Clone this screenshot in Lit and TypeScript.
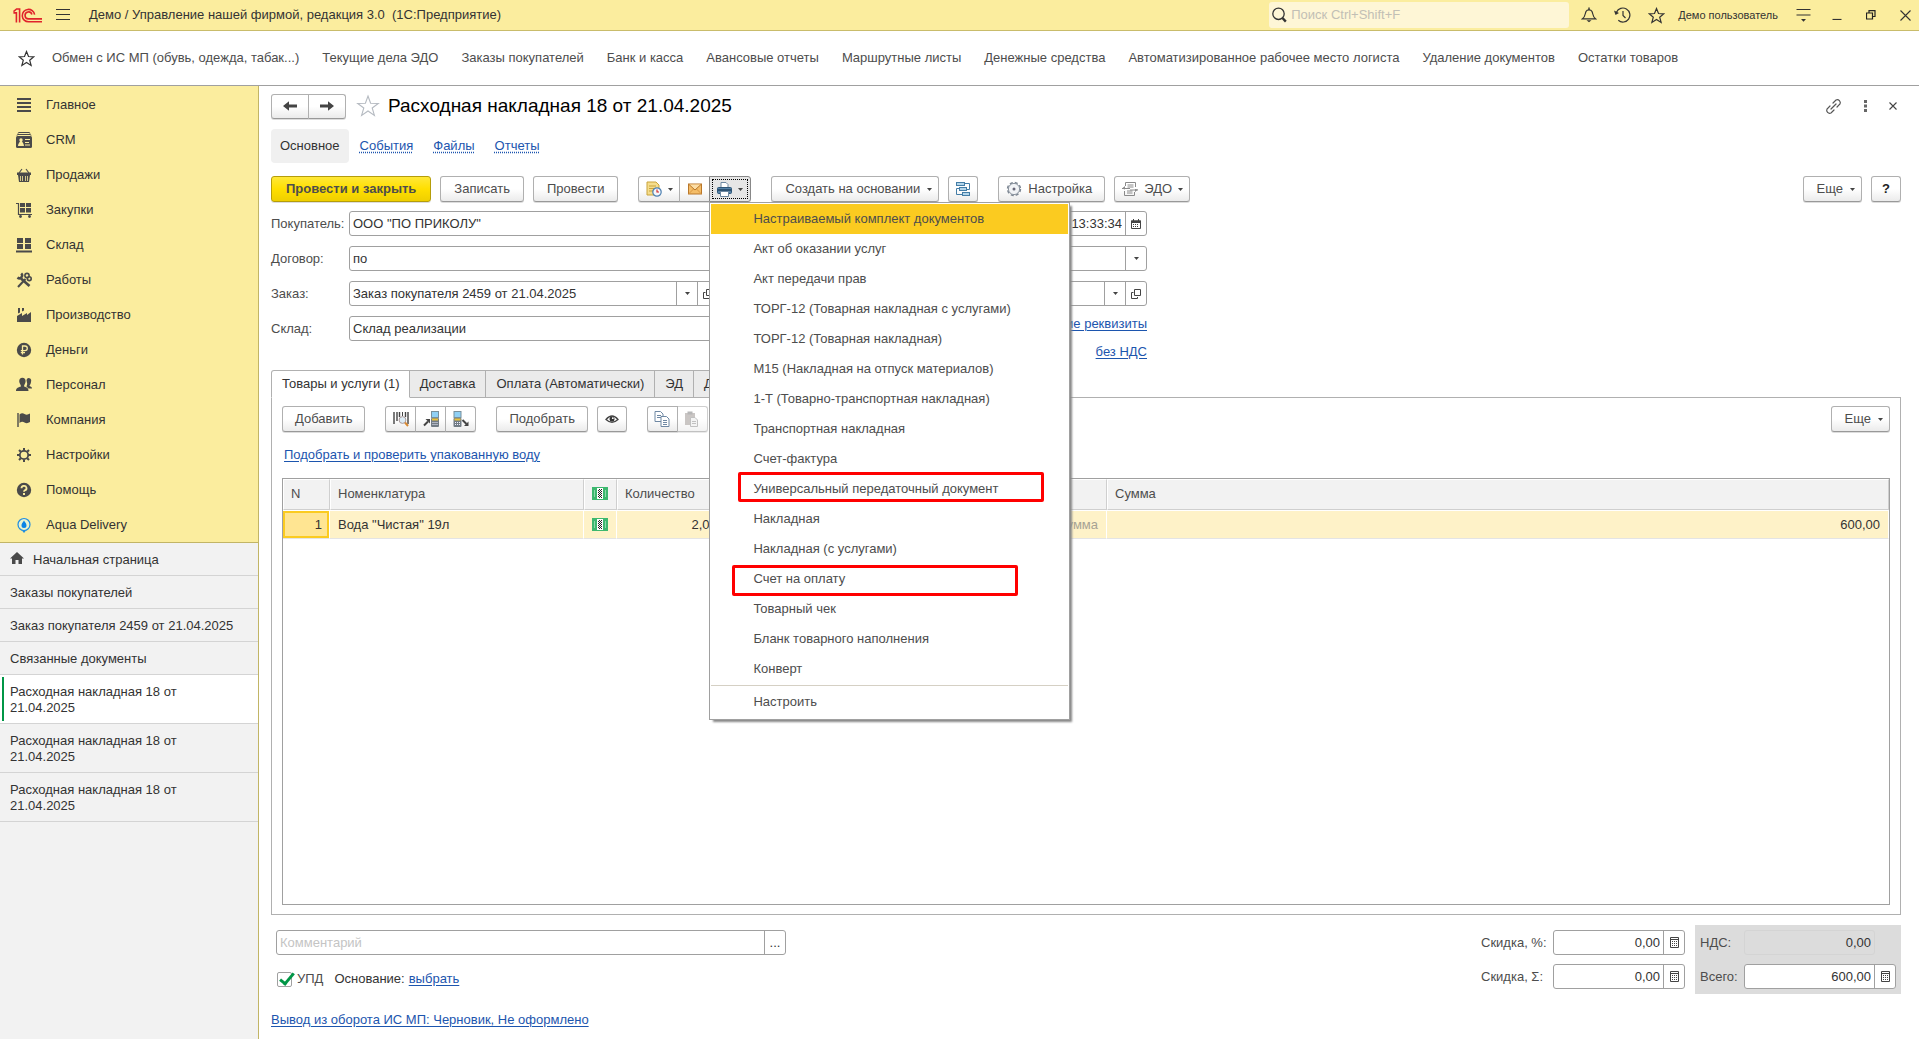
import { LitElement, html, svg, css, nothing, TemplateResult } from "lit";
import { customElement, property } from "lit/decorators.js";
import { classMap } from "lit/directives/class-map.js";

type Glyph = { w: number; h: number; body: TemplateResult };

const G = "#4a4a4a";

const glyphs: Record<string, Glyph> = {
  logo: { w: 29, h: 15, body: svg`<g fill="none" stroke="#e0232b" stroke-width="1.6">
    <path d="M.4 4.9 3.4 4.9V14.6M.4 3.6 3.6 1H6.6V14.6"/>
    <path d="M21.6 6.6A6.2 6.2 0 1 0 15.5 13.8H29"/><path d="M18.9 6.4A3.5 3.5 0 1 0 15.5 10.9H29"/></g>` },
  burger: { w: 14, h: 12, body: svg`<path d="M0 .5H14M0 5.5H14M0 10.5H14" stroke="#333" fill="none"/>` },
  search: { w: 15, h: 16, body: svg`<circle cx="6.5" cy="6.8" r="5.7" fill="none" stroke="#333" stroke-width="1.3"/><path d="M10.5 11 13.8 14.6" stroke="#333" stroke-width="2.4"/>` },
  bell: { w: 16, h: 16, body: svg`<path d="M1.5 11.8C4.6 9.4 3.9 6.6 5 4.4 5.6 3.2 6.4 2.8 8 2.8S10.4 3.2 11 4.4C12.1 6.6 11.4 9.4 14.5 11.8Z" fill="none" stroke="#333" stroke-width="1.2"/><path d="M8 .5V3" stroke="#333" stroke-width="1.4"/><path d="M5.5 13.3H10.5L8 15.3Z" fill="#333"/>` },
  history: { w: 17, h: 16, body: svg`<path d="M2.5 5.2A7 7 0 1 1 4.3 13.3" fill="none" stroke="#333" stroke-width="1.2"/><path d="M0 3.6 5 6 1.5 8Z" fill="#333"/><path d="M9 4V8.5L11.5 11" fill="none" stroke="#333" stroke-width="1.2"/>` },
  star: { w: 17, h: 17, body: svg`<path d="M8.5 1.5 10.5 6.5 15.8 6.8 11.7 10.2 13.1 15.4 8.5 12.5 3.9 15.4 5.3 10.2 1.2 6.8 6.5 6.5Z" fill="none" stroke="#333" stroke-width="1.2"/>` },
  bigStar: { w: 24, h: 24, body: svg`<path d="M12 2 14.6 9.2 22.3 9.4 16.2 14 18.4 21.4 12 17 5.6 21.4 7.8 14 1.7 9.4 9.4 9.2Z" fill="#fff" stroke="#b5bac1" stroke-width="1.1"/>` },
  panelMenu: { w: 15, h: 13, body: svg`<path d="M.5 .5H14.5M.5 6H14.5" stroke="#333" fill="none" stroke-width="1.2"/><path d="M5 10H10L7.5 12.7Z" fill="#333"/>` },
  minimize: { w: 10, h: 10, body: svg`<path d="M.5 9.5H9.5" stroke="#333" stroke-width="1.2"/>` },
  restore: { w: 10, h: 10, body: svg`<path d="M.5 3H6.5V9H.5ZM3 3V.7H9V6.5H6.5" fill="none" stroke="#222" stroke-width="1.2"/>` },
  close: { w: 11, h: 11, body: svg`<path d="M.5 .5 10.5 10.5M10.5 .5 .5 10.5" stroke="#333" stroke-width="1.1"/>` },
  closeSmall: { w: 8, h: 8, body: svg`<path d="M.5 .5 7.5 7.5M7.5 .5 .5 7.5" stroke="#444" stroke-width="1.1"/>` },
  link: { w: 17, h: 17, body: svg`<g fill="none" stroke="#555" stroke-width="1.2" stroke-linecap="round"><path d="M8 5 11 2A3 3 0 0 1 15 6L12 9"/><path d="M9 12 6 15A3 3 0 0 1 2 11L5 8"/><path d="M6 11 11 6"/></g>` },
  dots: { w: 3, h: 12, body: svg`<path d="M0 0H3V3H0ZM0 4.5H3V7.5H0ZM0 9H3V12H0Z" fill="#666"/>` },
  back: { w: 14, h: 10, body: svg`<path d="M0 5 6 .2V3.6H14V6.4H6V9.8Z" fill="#444"/>` },
  forward: { w: 14, h: 10, body: svg`<path d="M14 5 8 .2V3.6H0V6.4H8V9.8Z" fill="#444"/>` },
  caret: { w: 5, h: 3, body: svg`<path d="M0 0H5L2.5 3Z" fill="#444"/>` },
  main: { w: 16, h: 16, body: svg`<path d="M1 2H15M1 6H15M1 10H15M1 14H15" stroke="${G}" stroke-width="2"/>` },
  crm: { w: 16, h: 16, body: svg`<path d="M1 3.5Q1 2.5 2 2.5H14Q15 2.5 15 3.5M2 1.5Q2 .5 3 .5H13Q14 .5 14 1.5" fill="none" stroke="${G}"/><rect y="4" width="16" height="12" rx="1.5" fill="${G}"/><g fill="#faec9e"><circle cx="5" cy="8" r="1.7"/><path d="M2 14C2 11.5 3.5 10.5 4.3 9H5.7C6.5 10.5 8 11.5 8 14Z"/><path d="M9 7H14V8H9ZM9 10H13V11H9ZM9 12.5H14V13.5H9Z"/></g>` },
  sales: { w: 16, h: 16, body: svg`<path d="M3 6 6 2M13 6 10 2" stroke="${G}" stroke-width="1.1"/><rect x="1" y="5.5" width="14" height="2.5" fill="${G}"/><path d="M2 8H14L13 15H3Z" fill="${G}"/><path d="M4.5 9V14M6.5 9V14M9.5 9V14M11.5 9V14" stroke="#faec9e" stroke-width=".8"/>` },
  purchases: { w: 16, h: 16, body: svg`<path d="M0 1.5H2.5V12.5H16" fill="none" stroke="${G}" stroke-width="1.2"/><path d="M4 1H9V5H4ZM10 1H15V5H10ZM4 6H9V10.5H4ZM10 6H15V10.5H10Z" fill="${G}"/><circle cx="4.5" cy="14.5" r="1.4" fill="${G}"/><circle cx="13.5" cy="14.5" r="1.4" fill="${G}"/>` },
  stock: { w: 16, h: 16, body: svg`<path d="M1 1H7V6H1ZM9 1H15V6H9ZM1 7H7V12H1ZM9 7H15V12H9ZM0 13.5H16V15.5H0Z" fill="${G}"/>` },
  works: { w: 16, h: 16, body: svg`<g fill="none" stroke="${G}"><path d="M5 6.5 13.5 14" stroke-width="2.6"/><path d="M5.2 1.5A2.6 2.6 0 0 1 1.5 5.5" stroke-width="2.4"/><path d="M2 15 9.5 7" stroke-width="2"/><circle cx="11" cy="3.5" r="2.1" stroke-width="1.6"/><circle cx="13.3" cy="6.7" r="1.9" stroke-width="1.6"/></g>` },
  production: { w: 16, h: 16, body: svg`<path d="M1 15V9L6 6V9L11 6V8L15 5V15Z" fill="${G}"/><path d="M2 6.5V1H4V5.5ZM6 4.5V1H8V3.5Z" fill="${G}"/>` },
  money: { w: 16, h: 16, body: svg`<circle cx="8" cy="8" r="7.2" fill="${G}"/><path d="M6.5 12.5V4H9A2.3 2.3 0 0 1 9 8.6H4.8M4.8 10.6H9" fill="none" stroke="#faec9e" stroke-width="1.3"/>` },
  staff: { w: 16, h: 16, body: svg`<path d="M10.5 3A2.2 2.6 0 0 1 15 5C15 7 13.5 8 13.5 9 15 9.5 16 10 16 11.5H12.5L10.5 9.5Q11.8 7 10.5 3Z" fill="${G}"/><path d="M3.2 4.3A3.2 3.6 0 0 1 9.6 4.3C9.6 6.5 8 8 8 9.5 11 10.5 12.5 11 12.5 14H0C0 11 2 10.5 5 9.5 5 8 3.2 6.5 3.2 4.3Z" fill="${G}"/>` },
  company: { w: 16, h: 16, body: svg`<path d="M2 1V15" stroke="${G}" stroke-width="1.4"/><path d="M3.5 2.5Q6 .5 8.5 2T14 1.5V10Q11 12 8.5 10.5T3.5 11Z" fill="${G}"/>` },
  settings: { w: 16, h: 16, body: svg`<circle cx="8" cy="8" r="4.2" fill="none" stroke="${G}" stroke-width="1.8"/><path d="M8 1V3.5M8 12.5V15M1 8H3.5M12.5 8H15M3 3 4.8 4.8M11.2 11.2 13 13M13 3 11.2 4.8M4.8 11.2 3 13" stroke="${G}" stroke-width="2"/>` },
  help: { w: 16, h: 16, body: svg`<circle cx="8" cy="8" r="7.2" fill="${G}"/><path d="M5.5 6.2A2.5 2.3 0 1 1 8.8 8.3Q8 8.7 8 9.8" fill="none" stroke="#faec9e" stroke-width="1.8"/><rect x="7" y="11" width="2" height="2" fill="#faec9e"/>` },
  aqua: { w: 16, h: 16, body: svg`<circle cx="8" cy="7.5" r="6" fill="#eaf3d0" stroke="#1f8de0" stroke-width="1.2"/><path d="M6 13.5H10L8 16Z" fill="#1f8de0"/><path d="M8 3.5C9.3 5.5 10.5 6.8 10.5 8.5A2.5 2.5 0 0 1 5.5 8.5C5.5 6.8 6.7 5.5 8 3.5Z" fill="#0b83e6"/>` },
  home: { w: 14, h: 12, body: svg`<path d="M7 0 14 6.5H12V12H8.5V8H5.5V12H2V6.5H0Z" fill="${G}"/>` },
  docClock: { w: 16, h: 16, body: svg`<path d="M1 1H10L13 4V14H1Z" fill="#f5dd8c" stroke="#c9a33a"/><path d="M3 5H10M3 7.5H8M3 10H7" stroke="#c9a33a"/><circle cx="11" cy="11" r="4.2" fill="#f2f7fc" stroke="#4d7fb0" stroke-width="1.2"/><path d="M11 8.5V11H13" fill="none" stroke="#d02020" stroke-width="1.1"/>` },
  mail: { w: 14, h: 12, body: svg`<rect x=".5" y="1" width="13" height="10" fill="#f4bd68" stroke="#b9772a"/><path d="M1 10.5 5.5 6M13 10.5 8.5 6" fill="none" stroke="#d99743"/><path d="M1 1.5 7 7 13 1.5" fill="#fbdda6" stroke="#b9772a"/>` },
  printer: { w: 15, h: 15, body: svg`<path d="M4 6V.5H9L11 2.5V6" fill="#fff" stroke="#6d87a0"/><rect x=".5" y="5.5" width="14" height="6" rx="1" fill="#5582a8" stroke="#2f5778"/><path d="M1 8H14" stroke="#1f3f5c" stroke-width="1.4"/><path d="M3.5 9.5H11.5V14.5H3.5Z" fill="#fff" stroke="#6d87a0"/>` },
  structure: { w: 16, h: 16, body: svg`<g fill="#b3d5ea" stroke="#447da6"><rect x="1.5" y="1.5" width="8" height="3"/><rect x="4.5" y="6.5" width="7" height="3"/><rect x="7.5" y="11.5" width="7" height="3"/></g><path d="M9.5 2.5H14.5V8.5H11.5M4.5 7.5H1.5V13.5H7.5" fill="none" stroke="#447da6"/>` },
  gear: { w: 16, h: 16, body: svg`<circle cx="8" cy="8" r="6.4" fill="none" stroke="#7c8692" stroke-width="1.6" stroke-dasharray="3 2.03"/><circle cx="8" cy="8" r="5.6" fill="#f1f3f6" stroke="#8b949f"/><circle cx="8" cy="8" r="1.5" fill="#667"/>` },
  edo: { w: 16, h: 16, body: svg`<g fill="none" stroke="#8a8a8a"><path d="M3.5 5V1.5H13.5V6M2.5 10V14.5H12.5V11"/><path d="M5.5 4H11.5M5.5 6H11.5M5 10H10.5M5 12H10.5"/><path d="M0 7.5H8M8 9H16" stroke-width="1.2"/></g><path d="M0 7.5 3 5V8.5ZM16 8.5 13 11V8Z" fill="#8a8a8a"/>` },
  calendar: { w: 10, h: 10, body: svg`<path d="M.5 2H9.5V9.5H.5Z" fill="#fff" stroke="#444"/><path d="M0 1.5H10V4H0Z" fill="#444"/><path d="M2.5 0V2M7.5 0V2" stroke="#444"/><path d="M2 5.5H8M2 7.5H8" stroke="#444" stroke-dasharray="1 1"/>` },
  open: { w: 10, h: 10, body: svg`<path d="M3.5 .5H9.5V6.5H3.5ZM2.5 3.5H.5V9.5H6.5V8" fill="none" stroke="#444"/>` },
  calc: { w: 9, h: 11, body: svg`<path d="M.5 .5H8.5V10.5H.5ZM.5 2.5H8.5" fill="none" stroke="#444"/><path d="M2 4.5H7M2 6.5H7M2 8.5H7" stroke="#444" stroke-dasharray="1 1"/>` },
  barcode: { w: 16, h: 16, body: svg`<path d="M1 1V13M4 1V10M6.5 1V6M12.5 1V6M15 1V13" stroke="#444" stroke-width="1.4"/><path d="M9.5 1V5" stroke="#444"/><circle cx="9.5" cy="9" r="3.4" fill="#dcecf6" stroke="#a99"/><path d="M12 11.5 15 15" stroke="#d88a35" stroke-width="2"/>` },
  terminalIn: { w: 16, h: 16, body: svg`<rect x="8.5" y=".5" width="7" height="6" fill="#8fd0f5" stroke="#78909c"/><rect x="8" y="7" width="8" height="9" rx="1" fill="#717b84"/><path d="M9 8.5H15" stroke="#e8c23c" stroke-width="2"/><path d="M9.5 11.5H15M9.5 13.5H15" stroke="#eef" stroke-dasharray="1 1"/><path d="M1 14.5 5 10.5" stroke="#444" stroke-width="2"/><path d="M2.5 8H7V12.5Z" fill="#444"/>` },
  terminalOut: { w: 16, h: 16, body: svg`<rect x="1" y=".5" width="7" height="6" fill="#8fd0f5" stroke="#78909c"/><rect x=".5" y="7" width="8" height="9" rx="1" fill="#717b84"/><path d="M1.5 8.5H7.5" stroke="#e8c23c" stroke-width="2"/><path d="M2 11.5H7.5M2 13.5H7.5" stroke="#eef" stroke-dasharray="1 1"/><path d="M9.5 9 13.5 13" stroke="#444" stroke-width="2"/><path d="M15.5 10.5V15H11Z" fill="#444"/>` },
  eye: { w: 14, h: 10, body: svg`<path d="M1 5.5Q7-1.5 13 5.5 7 11 1 5.5Z" fill="#fff" stroke="#444" stroke-width="1.3"/><circle cx="7" cy="5" r="2.5" fill="#333"/><circle cx="7.8" cy="4.2" r=".9" fill="#fff"/>` },
  copy: { w: 16, h: 16, body: svg`<g fill="#fff" stroke="#6f88a3"><path d="M1 .5H6.5L9 3V10.5H1Z"/><path d="M7 5.5H12.5L15 8V15.5H7Z"/></g><path d="M3 4.5H7M3 6.5H7M9 9.5H13M9 11.5H13M9 13.5H13" stroke="#6f88a3"/>` },
  paste: { w: 16, h: 16, body: svg`<path d="M1 2H11V14H1Z" fill="#a8a19e"/><rect x="3.5" y=".5" width="5" height="3" fill="#888"/><path d="M6.5 6.5H11L13.5 9V15.5H6.5Z" fill="#eee" stroke="#999"/><path d="M8 10.5H12M8 12.5H12" stroke="#999"/>` },
  marking: { w: 16, h: 13, body: svg`<path d="M0 0H16V13H0Z" fill="#3db86f"/><path d="M5 1H11V12H5Z" fill="#fff"/><path d="M6 2H10V11H6Z" fill="#222"/><path d="M6 2.5H10M6 4.5H10M6 6.5H10M6 8.5H10M6 10.5H10" stroke="#fff" stroke-dasharray="1 1"/><path d="M7 3.5H10M7 5.5H10M7 7.5H10M7 9.5H10" stroke="#fff" stroke-dasharray="1 1"/><path d="M2.5 3V10M13.5 3V10" stroke="#8ad8a9"/>` },
};

const icon = (name: string) => {
  const g = glyphs[name];
  return html`<svg class="icon" width=${g.w} height=${g.h} viewBox="0 0 ${g.w} ${g.h}" aria-hidden="true">${g.body}</svg>`;
};

const base = css`
  * { box-sizing: border-box; }
  :host { font: 13px/16px "Liberation Sans", Arial, sans-serif; color: #333; }
  button, input { font: inherit; color: inherit; margin: 0; }
  button { padding: 0; border: 0; background: none; }
  .icon { display: block; flex: none; }
`;

@customElement("value-field")
class ValueField extends LitElement {
  @property() label = "";
  @property() value = "";
  @property() placeholder = "";
  @property({ type: Array }) actions: string[] = [];
  @property({ type: Boolean }) hideLabel = false;
  @property({ type: Boolean }) numeric = false;
  @property({ type: Boolean }) disabled = false;

  static styles = [base, css`
    :host { display: flex; align-items: center; }
    label { flex: none; width: var(--label-width, 78px); color: #4d4d4d; }
    .box { flex: 1; min-width: 0; height: 25px; display: flex; border: 1px solid #a0a0a0; border-radius: 3px; background: #fff; overflow: hidden; }
    .box.disabled { background: transparent; border-color: #d4d4d4; margin-right: 21px; }
    input { flex: 1; min-width: 0; width: 0; border: 0; outline: 0; padding: 0 3px; background: transparent; }
    input::placeholder { color: #c4c4c4; opacity: 1; }
    .numeric { text-align: right; }
    button { width: 21px; flex: none; border-left: 1px solid #a0a0a0; display: flex; align-items: center; justify-content: center; }
  `];

  render() {
    return html`
      ${this.hideLabel ? nothing : html`<label for="f">${this.label}</label>`}
      <div class=${classMap({ box: true, disabled: this.disabled })}>
        <input id="f" class=${classMap({ numeric: this.numeric })} .value=${this.value}
          placeholder=${this.placeholder} aria-label=${this.hideLabel ? this.label : nothing} ?readonly=${this.disabled}>
        ${this.actions.map((a) => html`<button aria-label=${a}>${a === "more" ? "..." : icon(a)}</button>`)}
      </div>`;
  }
}

@customElement("title-bar")
class TitleBar extends LitElement {
  static styles = [base, css`
    :host { display: flex; align-items: center; height: 31px; background: #fbed9e; border-bottom: 1px solid #c9bc6b; padding: 0 8px 0 13px; }
    .burger { margin: 0 19px 0 14px; }
    h1 { margin: 0; flex: 1; font-size: 13px; font-weight: normal; white-space: pre; }
    .search { display: flex; align-items: center; width: 300px; height: 26px; padding: 0 3px; background: #fef6d6; border-radius: 3px; }
    .search input { flex: 1; min-width: 0; border: 0; outline: 0; background: none; padding: 0 4px; }
    .search input::placeholder { color: #c2bfb5; opacity: 1; }
    .tools { display: flex; align-items: center; gap: 17px; padding-left: 12px; }
    .user { font-size: 11px; margin: 0 1px 0 -4px; }
    .window { display: flex; align-items: center; gap: 24px; padding-left: 21px; }
  `];
  render() {
    return html`
      ${icon("logo")}
      <button class="burger" aria-label="menu">${icon("burger")}</button>
      <h1>Демо / Управление нашей фирмой, редакция 3.0  (1С:Предприятие)</h1>
      <div class="search">${icon("search")}<input aria-label="search" placeholder="Поиск Ctrl+Shift+F"></div>
      <div class="tools">
        <button aria-label="bell">${icon("bell")}</button>
        <button aria-label="history">${icon("history")}</button>
        <button aria-label="star">${icon("star")}</button>
        <button class="user">Демо пользователь</button>
        <button aria-label="panel">${icon("panelMenu")}</button>
      </div>
      <div class="window">
        <button aria-label="minimize">${icon("minimize")}</button>
        <button aria-label="restore">${icon("restore")}</button>
        <button aria-label="close">${icon("close")}</button>
      </div>`;
  }
}

@customElement("favorites-bar")
class FavoritesBar extends LitElement {
  static styles = [base, css`
    :host { display: flex; align-items: center; height: 55px; padding: 0 18px; gap: 23px; border-bottom: 1px solid #a0a0a0; background: #fff; }
    button { color: #4d4d4d; white-space: nowrap; }
    .star { margin-right: -6px; }
  `];
  items = ["Обмен с ИС МП (обувь, одежда, табак...)", "Текущие дела ЭДО", "Заказы покупателей", "Банк и касса", "Авансовые отчеты", "Маршрутные листы", "Денежные средства", "Автоматизированное рабочее место логиста", "Удаление документов", "Остатки товаров"];
  render() {
    return html`<button class="star" aria-label="star">${icon("star")}</button>${this.items.map((t) => html`<button>${t}</button>`)}`;
  }
}

@customElement("side-bar")
class SideBar extends LitElement {
  static styles = [base, css`
    :host { display: flex; flex-direction: column; background: #f2f2f2; border-right: 1px solid #c2b566; }
    nav { background: #fbed9e; border-bottom: 1px solid #c2b566; padding-bottom: 1px; }
    .section { display: flex; align-items: center; gap: 14px; width: 100%; height: 35px; padding: 2px 16px 0; text-align: left; }
    .win { display: flex; align-items: flex-start; gap: 9px; width: 100%; padding: 9px 60px 7px 10px; text-align: left; border-bottom: 1px solid #d4d4d4; }
    .win.short { padding-right: 0; }
    .win.active { position: relative; background: #fff; }
    .win.active::before { content: ""; position: absolute; left: 2px; top: 2px; bottom: 2px; width: 2px; background: #009646; }
  `];
  sections = [["main", "Главное"], ["crm", "CRM"], ["sales", "Продажи"], ["purchases", "Закупки"], ["stock", "Склад"], ["works", "Работы"], ["production", "Производство"], ["money", "Деньги"], ["staff", "Персонал"], ["company", "Компания"], ["settings", "Настройки"], ["help", "Помощь"], ["aqua", "Aqua Delivery"]];
  windows = ["Начальная страница", "Заказы покупателей", "Заказ покупателя 2459 от 21.04.2025", "Связанные документы", "Расходная накладная 18 от 21.04.2025", "Расходная накладная 18 от 21.04.2025", "Расходная накладная 18 от 21.04.2025"];
  render() {
    return html`
      <nav>${this.sections.map(([i, t]) => html`<button class="section">${icon(i)}<span>${t}</span></button>`)}</nav>
      <div>${this.windows.map((t, i) => html`<button class=${classMap({ win: true, short: i < 4, active: i === 4 })}>${i === 0 ? icon("home") : nothing}<span>${t}</span></button>`)}</div>`;
  }
}

@customElement("print-menu")
class PrintMenu extends LitElement {
  static styles = [base, css`
    :host { display: block; position: absolute; z-index: 5; top: 26px; left: 0; width: 361px; padding: 1px; background: #fff; border: 1px solid #a0a0a0; box-shadow: 3px 3px 2px -1px #888; color: #4d4d4d; }
    button { display: block; width: 100%; height: 30px; padding: 0 0 0 42px; text-align: left; }
    .current { background: #fbcb20; }
    .last { margin-top: 1px; border-top: 1px solid #d5d0c4; height: 33px; }
    .mark { position: absolute; border: 3px solid #f00; border-radius: 2px; pointer-events: none; }
    .upd { left: 28px; top: 269px; width: 306px; height: 30px; }
    .invoice { left: 22px; top: 362px; width: 286px; height: 31px; }
  `];
  items = ["Настраиваемый комплект документов", "Акт об оказании услуг", "Акт передачи прав", "ТОРГ-12 (Товарная накладная с услугами)", "ТОРГ-12 (Товарная накладная)", "М15 (Накладная на отпуск материалов)", "1-Т (Товарно-транспортная накладная)", "Транспортная накладная", "Счет-фактура", "Универсальный передаточный документ", "Накладная", "Накладная (с услугами)", "Счет на оплату", "Товарный чек", "Бланк товарного наполнения", "Конверт"];
  render() {
    return html`${this.items.map((t, i) => html`<button class=${i === 0 ? "current" : ""}>${t}</button>`)}
      <button class="last">Настроить</button>
      <div class="mark upd"></div><div class="mark invoice"></div>`;
  }
}

@customElement("app-root")
class AppRoot extends LitElement {
  static styles = [base, css`
    :host { display: grid; grid-template: auto auto 1fr / 259px minmax(0, 1fr); min-height: 100vh; background: #fff; }
    title-bar, favorites-bar { grid-column: 1 / -1; }
    main { display: flex; flex-direction: column; padding: 7px 18px 11px 12px; }
    a { color: #1c55ae; text-decoration: underline; text-underline-offset: 2px; white-space: nowrap; }
    .row { display: flex; align-items: center; }
    .grow { flex: 1; }

    .btn { display: flex; align-items: center; justify-content: center; gap: 6px; height: 26px; padding: 0 13px; color: #4d4d4d; border: 1px solid #b0b0b0; border-bottom-color: #999; border-radius: 3px; background: linear-gradient(#fff 50%, #ebebeb); box-shadow: 0 1px 0 #ddd; white-space: nowrap; }
    .btn.primary { padding: 0 14px; font-weight: bold; border-color: #b59d0a; background: linear-gradient(#ffe838, #ffdf00 50%, #efcf00); }
    .btn.square { width: 30px; padding: 0; }
    .btn.help { font-weight: bold; color: #222; }
    .group { display: flex; position: relative; }
    .group > .btn { border-radius: 0; margin-right: -1px; padding: 0; }
    .group > .btn:first-child { border-radius: 3px 0 0 3px; }
    .group > .btn.end { border-radius: 0 3px 3px 0; margin-right: 0; }
    .drop { position: relative; display: flex; }
    .w31 { width: 31px; } .w42 { width: 42px; }
    .btn.pressed { background: #e6e6e6; border-color: #888; border-radius: 0 3px 3px 0; outline: 1px dotted #000; outline-offset: -4px; padding: 0; }
    .off { opacity: .6; }
    .btn.wide { padding: 0 6px 0 13px; gap: 7px; }
    .btn.lead { padding: 0 12px 0 7px; }
    .btn.lead.menu { padding-right: 6px; }

    .head { height: 26px; }
    .nav .btn { width: 38px; height: 25px; }
    h2 { margin: 0; font-size: 19px; line-height: 24px; font-weight: normal; color: #000; }
    .head .fav { margin: 0 8px 0 10px; }
    .head .tools { display: flex; align-items: center; gap: 22px; padding-right: 4px; }
    .pages { gap: 20px; margin-top: 10px; }
    .pages span { padding: 9px; height: 34px; margin-right: -9px; border-radius: 4px; background: #f0f0f0; }
    .pages a { text-decoration-style: dotted; }
    .commands { margin-top: 13px; gap: 9px; }
    .gap { margin-left: 11px; }

    .form { display: flex; justify-content: space-between; max-width: 876px; margin-top: 9px; }
    .col { display: flex; flex-direction: column; gap: 10px; width: 448px; }
    .col.right { width: 165px; }
    .col.right a { align-self: flex-end; }
    .links { display: flex; flex-direction: column; gap: 12px; }

    .tabs { display: flex; margin: 10px 0 -1px; position: relative; }
    .tab { height: 28px; padding: 0 10px; border: 1px solid #b0b0b0; border-left-width: 0; background: #ebebeb; }
    .tab.sel { border-left-width: 1px; border-bottom-color: #fff; border-top-left-radius: 3px; background: #fff; padding: 0 9px 0 10px; }
    .panel { flex: 1; display: flex; flex-direction: column; padding: 8px 10px 9px; border: 1px solid #b0b0b0; }
    .panel .commands { margin-top: 0; }
    .panel .text { padding: 0 12px; }
    .check { margin: 15px 0 15px 2px; }
    .grid { flex: 1; border: 1px solid #a0a0a0; }
    table { width: 100%; table-layout: fixed; border-collapse: separate; border-spacing: 0; }
    th { height: 31px; padding: 0 7px 2px; font-weight: normal; text-align: left; color: #4d4d4d; background: #f2f2f2; border: 1px solid #fff; border-right-color: #cfcfcf; border-bottom-color: #cfcfcf; }
    td { height: 29px; padding: 0 8px; background: #fef2c8; background-clip: padding-box; border-right: 1px solid #fff; border-top: 1px solid #fff; border-bottom: 1px solid #e4e4e4; }
    .c-n { width: 47px; } .c-name { width: 254px; } .c-mark { width: 33px; } .c-qty { width: 116px; } .c-mid { width: 374px; }
    td.n { text-align: right; padding-right: 7px; background: #ffe592; box-shadow: inset 0 0 0 2px #fbcb20; }
    .num { text-align: right; }
    .hint { color: #a6a294; }

    footer { display: grid; grid-template-columns: 515px 1fr auto auto; column-gap: 10px; padding-top: 10px; }
    .notes { display: flex; flex-direction: column; gap: 16px; padding: 5px 0 0 5px; }
    .notes .row { gap: 4px; }
    .notes label { margin-right: 7px; color: #4d4d4d; }
    input[type="checkbox"] { appearance: none; width: 15px; height: 15px; border: 1px solid #a0a0a0; border-radius: 2px; background: #fff; position: relative; margin: 0 1px; }
    input[type="checkbox"]:checked::after { content: ""; position: absolute; left: 5px; top: -3px; width: 5px; height: 12px; border: solid #009646; border-width: 0 3px 3px 0; transform: rotate(40deg); }
    .totals { display: flex; flex-direction: column; gap: 9px; padding: 5px 0; --label-width: 72px; }
    .sale { width: 204px; }
    .totals.sum { width: 206px; padding: 5px; background: #dcdcdc; --label-width: 44px; }
    .state { margin-top: 18px; }
  `];

  render() {
    const b = (t: string, c = "") => html`<button class="btn ${c}">${t}</button>`;
    return html`
      <title-bar></title-bar>
      <favorites-bar></favorites-bar>
      <side-bar></side-bar>
      <main>
        <div class="row head">
          <div class="group nav">
            <button class="btn" aria-label="back">${icon("back")}</button>
            <button class="btn end" aria-label="forward">${icon("forward")}</button>
          </div>
          <button class="fav" aria-label="star">${icon("bigStar")}</button>
          <h2 class="grow">Расходная накладная 18 от 21.04.2025</h2>
          <div class="tools">
            <button aria-label="link">${icon("link")}</button>
            <button aria-label="dots">${icon("dots")}</button>
            <button aria-label="close">${icon("closeSmall")}</button>
          </div>
        </div>
        <div class="row pages"><span>Основное</span><a href="#">События</a><a href="#">Файлы</a><a href="#">Отчеты</a></div>

        <div class="row commands">
          ${b("Провести и закрыть", "primary")}${b("Записать")}${b("Провести")}
          <div class="group gap">
            <button class="btn w42" aria-label="doc">${icon("docClock")}${icon("caret")}</button>
            <button class="btn w31" aria-label="mail">${icon("mail")}</button>
            <div class="drop"><button class="btn pressed w42" aria-label="print">${icon("printer")}${icon("caret")}</button><print-menu></print-menu></div>
          </div>
          <button class="btn wide gap">Создать на основании ${icon("caret")}</button>
          <button class="btn square" aria-label="structure">${icon("structure")}</button>
          <button class="btn lead gap">${icon("gear")}Настройка</button>
          <button class="btn lead menu">${icon("edo")}ЭДО ${icon("caret")}</button>
          <span class="grow"></span>
          <button class="btn wide">Еще ${icon("caret")}</button>
          ${b("?", "square help")}
        </div>

        <div class="form">
          <div class="col">
            <value-field label="Покупатель:" value='ООО "ПО ПРИКОЛУ"'></value-field>
            <value-field label="Договор:" value="по"></value-field>
            <value-field label="Заказ:" value="Заказ покупателя 2459 от 21.04.2025" .actions=${["caret", "open"]}></value-field>
            <value-field label="Склад:" value="Склад реализации"></value-field>
          </div>
          <div class="col right">
            <value-field hideLabel numeric label="Дата" value="21.04.2025 13:33:34" .actions=${["calendar"]}></value-field>
            <value-field hideLabel label="Организация" .actions=${["caret"]}></value-field>
            <value-field hideLabel label="Статус" .actions=${["caret", "open"]}></value-field>
            <div class="links"><a href="#">Другие реквизиты</a><a href="#">без НДС</a></div>
          </div>
        </div>

        <div class="tabs">
          <button class="tab sel">Товары и услуги (1)</button><button class="tab">Доставка</button><button class="tab">Оплата (Автоматически)</button><button class="tab">ЭД</button><button class="tab">Д</button>
        </div>
        <section class="panel">
          <div class="row commands">
            ${b("Добавить", "text")}
            <div class="group gap">
              <button class="btn w31" aria-label="barcode">${icon("barcode")}</button>
              <button class="btn w31" aria-label="terminal in">${icon("terminalIn")}</button>
              <button class="btn w31 end" aria-label="terminal out">${icon("terminalOut")}</button>
            </div>
            ${b("Подобрать", "text gap")}
            <button class="btn square" aria-label="eye">${icon("eye")}</button>
            <div class="group gap">
              <button class="btn w31" aria-label="copy">${icon("copy")}</button>
              <button class="btn w31 end off" aria-label="paste">${icon("paste")}</button>
            </div>
            <span class="grow"></span>
            <button class="btn wide">Еще ${icon("caret")}</button>
          </div>
          <div class="check"><a href="#">Подобрать и проверить упакованную воду</a></div>
          <div class="grid">
            <table>
              <colgroup><col class="c-n"><col class="c-name"><col class="c-mark"><col class="c-qty"><col class="c-mid"><col></colgroup>
              <thead><tr><th>N</th><th>Номенклатура</th><th>${icon("marking")}</th><th>Количество</th><th></th><th>Сумма</th></tr></thead>
              <tbody><tr><td class="n">1</td><td>Вода "Чистая" 19л</td><td>${icon("marking")}</td><td class="num">2,000</td><td class="num hint">Сумма</td><td class="num">600,00</td></tr></tbody>
            </table>
          </div>
        </section>

        <footer>
          <div class="notes">
            <value-field hideLabel label="Комментарий" placeholder="Комментарий" .actions=${["more"]}></value-field>
            <div class="row"><input type="checkbox" id="upd" checked><label for="upd">УПД</label><span>Основание:</span><a href="#">выбрать</a></div>
          </div>
          <span></span>
          <div class="totals sale">
            <value-field numeric label="Скидка, %:" value="0,00" .actions=${["calc"]}></value-field>
            <value-field numeric label="Скидка, Σ:" value="0,00" .actions=${["calc"]}></value-field>
          </div>
          <div class="totals sum">
            <value-field numeric disabled label="НДС:" value="0,00"></value-field>
            <value-field numeric label="Всего:" value="600,00" .actions=${["calc"]}></value-field>
          </div>
        </footer>
        <div class="state"><a href="#">Вывод из оборота ИС МП: Черновик, Не оформлено</a></div>
      </main>`;
  }
}
